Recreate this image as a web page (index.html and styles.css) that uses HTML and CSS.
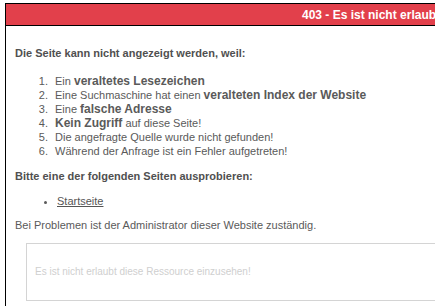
FILE: index.html
```html
<!DOCTYPE html>
<html lang="de">
<head>
    <meta charset="UTF-8">
    <title>403 - Es ist nicht erlaubt</title>
    <link rel="stylesheet" href="styles.css">
</head>
<body>
    <div class="page">
        <div class="header">403 - Es ist nicht erlaubt diese Ressource einzusehen!</div>
        <div class="content">
            <h2>Die Seite kann nicht angezeigt werden, weil:</h2>
            <ol class="reasons">
                <li>Ein <b>veraltetes Lesezeichen</b></li>
                <li>Eine Suchmaschine hat einen <b>veralteten Index der Website</b></li>
                <li>Eine <b>falsche Adresse</b></li>
                <li><b>Kein Zugriff</b> auf diese Seite!</li>
                <li>Die angefragte Quelle wurde nicht gefunden!</li>
                <li>Während der Anfrage ist ein Fehler aufgetreten!</li>
            </ol>
            <h2>Bitte eine der folgenden Seiten ausprobieren:</h2>
            <ul class="links">
                <li><a href="#">Startseite</a></li>
            </ul>
            <p class="note">Bei Problemen ist der Administrator dieser Website zuständig.</p>
            <div class="message">Es ist nicht erlaubt diese Ressource einzusehen!</div>
        </div>
    </div>
</body>
</html>
```

FILE: styles.css
```css
body {
    margin: 0;
    background: #ffffff;
    font-family: "Liberation Sans", Arial, sans-serif;
    font-size: 11px;
    color: #5a5a5a;
    overflow: hidden;
}

.page {
    margin: 3px 0 0 5px;
    width: 600px;
    height: 400px;
    border-top: 1px solid #000;
    border-left: 1px solid #000;
}

.header {
    height: 21px;
    line-height: 22px;
    background-color: #e2404b;
    border-bottom: 1px solid #000;
    color: #ffffff;
    font-weight: bold;
    font-size: 12px;
    padding-left: 296px;
    white-space: nowrap;
    overflow: hidden;
}

.content {
    padding: 21px 9px 0 9px;
}

h2 {
    font-size: 11px;
    font-weight: bold;
    margin: 0;
    color: #505050;
}

.reasons {
    margin: 15px 0 12px 0;
    padding-left: 36px;
    line-height: 14px;
}

.reasons li {
    padding-left: 4px;
}

.reasons b {
    font-size: 12px;
    line-height: 1;
}

.links {
    margin: 12px 0 11px 0;
    padding-left: 42px;
    line-height: 14px;
}

.links a {
    color: #555;
}

.note {
    margin: 0;
}

.message {
    margin: 12px 0 0 11px;
    height: 56px;
    line-height: 56px;
    border: 1px solid #d4d4d4;
    padding-left: 8px;
    color: #cfcfcf;
    font-size: 10px;
}
```
